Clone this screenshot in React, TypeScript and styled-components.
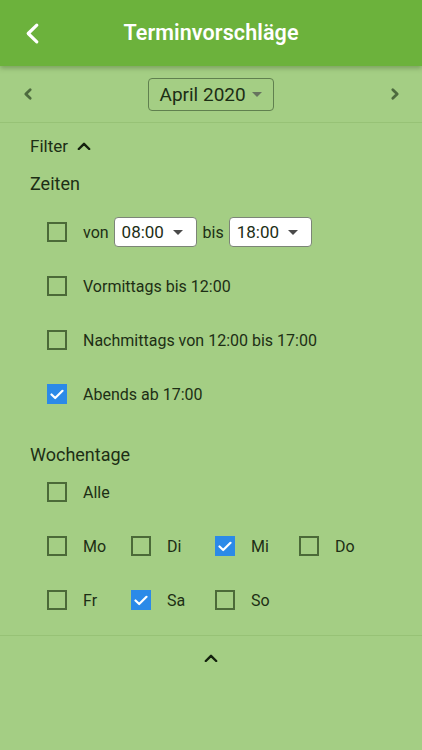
import React from "react";
import styled, { createGlobalStyle } from "styled-components";

const Global = createGlobalStyle`
  html, body { margin: 0; padding: 0; }
  body {
    background: #a4ce84;
    font-family: Roboto, "Noto Sans", "Liberation Sans", sans-serif;
    color: #1d2e15;
  }
  * { box-sizing: border-box; }
`;

const Page = styled.div`
  width: 422px;
  min-height: 750px;
  background: #a4ce84;
  display: flex;
  flex-direction: column;
`;

const Header = styled.header`
  height: 66px;
  background: #6cb23c;
  display: flex;
  align-items: center;
  justify-content: center;
  position: relative;
  box-shadow: 0 2px 5px rgba(40, 70, 20, 0.35);
  z-index: 1;
`;

const BackButton = styled.button`
  position: absolute;
  left: 17px;
  top: 17px;
  width: 30px;
  height: 32px;
  border: none;
  background: none;
  padding: 0;
  display: flex;
  align-items: center;
  justify-content: center;
`;

const Title = styled.h1`
  margin: 0 0 1px 0;
  font-size: 21.5px;
  font-weight: 600;
  color: #ffffff;
  letter-spacing: 0.1px;
`;

const MonthBar = styled.div`
  height: 57px;
  display: flex;
  align-items: center;
  justify-content: space-between;
  padding: 0 20px 0 21px;
  border-bottom: 1px solid #97c276;
`;

const NavArrow = styled.button`
  border: none;
  background: none;
  padding: 0;
  width: 14px;
  height: 20px;
  display: flex;
  align-items: center;
  justify-content: center;
`;

const MonthSelect = styled.div`
  width: 126px;
  height: 33px;
  border: 1.5px solid #60804f;
  border-radius: 4px;
  display: flex;
  align-items: center;
  justify-content: space-between;
  padding: 0 11px 0 11px;
  font-size: 19px;
  color: #1d2e15;
  margin-right: 2px;
`;

const Caret = styled.span<{ $color?: string }>`
  width: 0;
  height: 0;
  border-left: 5.5px solid transparent;
  border-right: 5.5px solid transparent;
  border-top: 5.5px solid ${(p) => p.$color || "#66745e"};
`;

const Filter = styled.section`
  padding: 11px 0 20px 30px;
  border-bottom: 1px solid #97c276;
`;

const FilterToggle = styled.div`
  display: flex;
  align-items: center;
  gap: 9px;
  height: 24px;
  font-size: 17px;
`;

const GroupTitle = styled.div<{ $top: number }>`
  font-size: 18px;
  line-height: 24px;
  margin-top: ${(p) => p.$top}px;
`;

const Rows = styled.div<{ $top: number }>`
  display: flex;
  flex-direction: column;
  gap: 24px;
  margin-top: ${(p) => p.$top}px;
  padding-left: 17px;
`;

const Row = styled.div`
  display: flex;
  align-items: center;
  height: 30px;
`;

const DayGrid = styled.div`
  display: grid;
  grid-template-columns: repeat(4, 84px);
  align-items: center;
  height: 30px;
`;

const Item = styled.label`
  display: flex;
  align-items: center;
  gap: 16px;
  font-size: 16px;
  color: #1d2e15;
`;

const Box = styled.span<{ $checked?: boolean }>`
  width: 20px;
  height: 20px;
  flex: none;
  border: ${(p) => (p.$checked ? "none" : "2.5px solid #4b6a38")};
  background: ${(p) => (p.$checked ? "#2b8ae8" : "transparent")};
  display: flex;
  align-items: center;
  justify-content: center;
`;

const Word = styled.span<{ $left?: number; $right?: number }>`
  font-size: 16px;
  margin: 0 ${(p) => p.$right || 0}px 0 ${(p) => p.$left || 0}px;
`;

const TimeSelect = styled.div`
  width: 83px;
  height: 30px;
  background: #ffffff;
  border: 1px solid #7c8577;
  border-radius: 4px;
  display: flex;
  align-items: center;
  justify-content: space-between;
  padding: 0 13px 0 7px;
  font-size: 17px;
`;

const Footer = styled.div`
  height: 44px;
  display: flex;
  align-items: center;
  justify-content: center;
`;

const Check = () => (
  <svg width="14" height="11" viewBox="0 0 14 11">
    <path d="M1.5 5.5 L5.2 9 L12.5 1.8" fill="none" stroke="#fff" strokeWidth="2.2" strokeLinecap="round" strokeLinejoin="round" />
  </svg>
);

const CheckBox = ({ checked }: { checked?: boolean }) => (
  <Box $checked={checked}>{checked && <Check />}</Box>
);

const UpCaret = ({ size = 14 }: { size?: number }) => (
  <svg width={size} height={size * 0.6} viewBox="0 0 14 8.4">
    <path d="M1.8 7 L7 1.8 L12.2 7" fill="none" stroke="#14210e" strokeWidth="2.4" strokeLinecap="round" strokeLinejoin="round" />
  </svg>
);

const Chevron = ({ dir, color, w, h, sw }: { dir: "l" | "r"; color: string; w: number; h: number; sw: number }) => (
  <svg width={w} height={h} viewBox={`0 0 ${w} ${h}`}>
    <path
      d={dir === "l" ? `M${w - sw} ${sw} L${sw} ${h / 2} L${w - sw} ${h - sw}` : `M${sw} ${sw} L${w - sw} ${h / 2} L${sw} ${h - sw}`}
      fill="none"
      stroke={color}
      strokeWidth={sw}
      strokeLinecap="round"
      strokeLinejoin="round"
    />
  </svg>
);

const days1 = [
  { d: "Mo", c: false },
  { d: "Di", c: false },
  { d: "Mi", c: true },
  { d: "Do", c: false },
];
const days2 = [
  { d: "Fr", c: false },
  { d: "Sa", c: true },
  { d: "So", c: false },
];

export default function App() {
  return (
    <Page>
      <Global />
      <Header>
        <BackButton aria-label="Zurück">
          <Chevron dir="l" color="#ffffff" w={15} h={23} sw={3.2} />
        </BackButton>
        <Title>Terminvorschläge</Title>
      </Header>
      <MonthBar>
        <NavArrow aria-label="Vorheriger Monat">
          <Chevron dir="l" color="#4d6b3e" w={10} h={14} sw={2.8} />
        </NavArrow>
        <MonthSelect>
          <span>April 2020</span>
          <Caret />
        </MonthSelect>
        <NavArrow aria-label="Nächster Monat">
          <Chevron dir="r" color="#4d6b3e" w={10} h={14} sw={2.8} />
        </NavArrow>
      </MonthBar>
      <Filter>
        <FilterToggle>
          <span>Filter</span>
          <UpCaret size={14} />
        </FilterToggle>
        <GroupTitle $top={14}>Zeiten</GroupTitle>
        <Rows $top={21}>
          <Row>
            <Item>
              <CheckBox />
            </Item>
            <Word $left={16} $right={5}>von</Word>
            <TimeSelect>
              <span>08:00</span>
              <Caret $color="#4a4a4a" />
            </TimeSelect>
            <Word $left={6} $right={5}>bis</Word>
            <TimeSelect>
              <span>18:00</span>
              <Caret $color="#4a4a4a" />
            </TimeSelect>
          </Row>
          <Row>
            <Item>
              <CheckBox />
              Vormittags bis 12:00
            </Item>
          </Row>
          <Row>
            <Item>
              <CheckBox />
              Nachmittags von 12:00 bis 17:00
            </Item>
          </Row>
          <Row>
            <Item>
              <CheckBox checked />
              Abends ab 17:00
            </Item>
          </Row>
        </Rows>
        <GroupTitle $top={34}>Wochentage</GroupTitle>
        <Rows $top={10}>
          <Row>
            <Item>
              <CheckBox />
              Alle
            </Item>
          </Row>
          <DayGrid>
            {days1.map((x) => (
              <Item key={x.d}>
                <CheckBox checked={x.c} />
                {x.d}
              </Item>
            ))}
          </DayGrid>
          <DayGrid>
            {days2.map((x) => (
              <Item key={x.d}>
                <CheckBox checked={x.c} />
                {x.d}
              </Item>
            ))}
          </DayGrid>
        </Rows>
      </Filter>
      <Footer>
        <UpCaret size={14} />
      </Footer>
    </Page>
  );
}
